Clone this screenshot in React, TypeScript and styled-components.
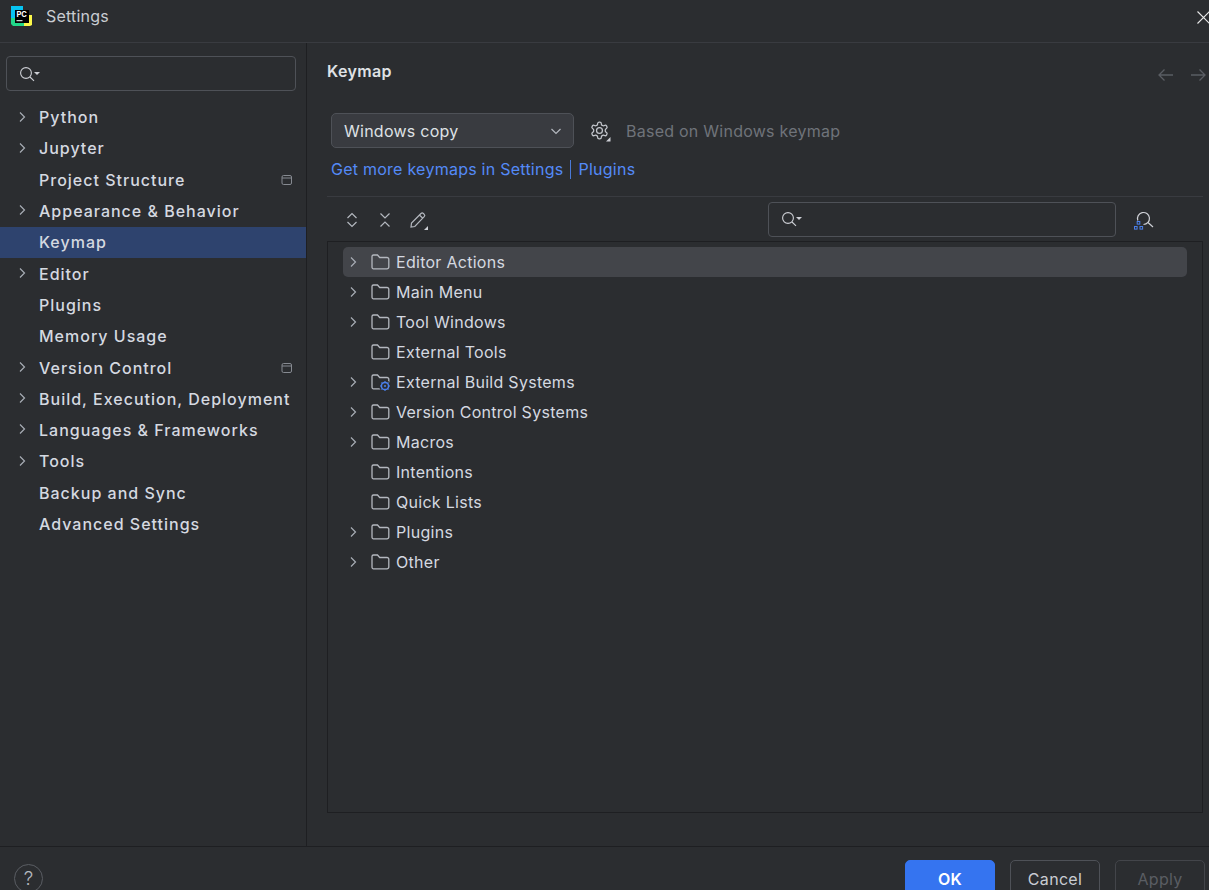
import React from 'react';
import styled, { createGlobalStyle } from 'styled-components';

const GlobalStyle = createGlobalStyle`
	html, body {
		margin: 0;
		padding: 0;
		height: 890px;
		overflow: hidden;
		background: #2b2d30;
	}
	* {
		box-sizing: border-box;
	}
`;

const Window = styled.div`
	width: 1209px;
	height: 890px;
	overflow: hidden;
	display: flex;
	flex-direction: column;
	background: #2b2d30;
	color: #dfe1e5;
	font-family: Inter, 'Noto Sans', sans-serif;
	font-size: 16px;
`;

const TitleBar = styled.div`
	height: 43px;
	flex: none;
	display: flex;
	align-items: flex-start;
	padding: 6px 0 0 11px;
	border-bottom: 1px solid #393b40;
`;

const Logo = styled.svg`
	width: 21px;
	height: 21px;
	flex: none;
`;

const TitleText = styled.span`
	margin-left: 14px;
	font-size: 16px;
	letter-spacing: 0.2px;
	color: #c9ccd2;
`;

const CloseButton = styled.svg`
	margin-left: auto;
	margin-top: 5px;
	width: 13px;
	height: 13px;
	flex: none;
	position: relative;
	left: 1px;
`;

const Body = styled.div`
	height: 803px;
	flex: none;
	display: flex;
`;

const Sidebar = styled.div`
	width: 307px;
	flex: none;
	border-right: 1px solid #1e1f22;
	padding-top: 13px;
`;

const SearchBox = styled.div<{ $width: number; $height: number }>`
	width: ${p => p.$width}px;
	height: ${p => p.$height}px;
	flex: none;
	display: flex;
	align-items: center;
	padding-left: 12px;
	border: 1px solid #4e5157;
	border-radius: 4px;
`;

const SidebarSearch = styled(SearchBox)`
	margin: 0 0 10.5px 6px;
`;

const NavRow = styled.div<{ $selected?: boolean }>`
	height: 31.3px;
	display: flex;
	align-items: center;
	position: relative;
	padding-left: 39px;
	letter-spacing: 1px;
	font-weight: 500;
	color: #d5d9e0;
	background: ${p => (p.$selected ? '#2e436e' : 'transparent')};
`;

const NavChevron = styled.svg`
	position: absolute;
	left: 16px;
	top: 9px;
	width: 12px;
	height: 12px;
`;

const ProjectBadge = styled.svg`
	position: absolute;
	right: 13px;
	top: 10px;
	width: 12px;
	height: 12px;
`;

const Main = styled.div`
	flex: 1;
	min-width: 0;
	padding: 0 6px 0 20px;
	display: flex;
	flex-direction: column;
`;

const HeadingRow = styled.div`
	height: 70px;
	flex: none;
	display: flex;
	align-items: flex-start;
	justify-content: space-between;
`;

const Heading = styled.h1`
	margin: 19px 0 0 0;
	font-size: 16px;
	line-height: 19px;
	font-weight: 600;
	letter-spacing: 0.35px;
	color: #dfe1e5;
`;

const NavArrows = styled.div`
	display: flex;
	gap: 16px;
	margin: 25px -10px 0 0;
	width: 56px;
`;

const ArrowIcon = styled.svg`
	width: 17px;
	height: 14px;
	flex: none;
`;

const KeymapRow = styled.div`
	display: flex;
	align-items: center;
	height: 35px;
	padding-left: 4px;
`;

const KeymapSelect = styled.div`
	width: 243px;
	height: 35px;
	display: flex;
	align-items: center;
	justify-content: space-between;
	padding: 0 11px 0 12px;
	background: #393b40;
	border: 1px solid #4e5157;
	border-radius: 5px;
	letter-spacing: 0.25px;
	color: #dfe1e5;
`;

const GearIcon = styled.svg`
	width: 22px;
	height: 22px;
	margin-left: 15px;
	flex: none;
`;

const BasedOn = styled.span`
	margin-left: 15px;
	color: #6f737a;
	letter-spacing: 0.25px;
`;

const LinksRow = styled.div`
	height: 49px;
	flex: none;
	display: flex;
	align-items: center;
	padding: 0 0 6px 4px;
	border-bottom: 1px solid #393b40;
	color: #548af7;
	letter-spacing: 0.25px;
`;

const LinkSeparator = styled.span`
	width: 1px;
	height: 19px;
	margin: 0 7px;
	background: #4a7ad8;
`;

const Toolbar = styled.div`
	height: 44px;
	flex: none;
	display: flex;
	align-items: center;
	padding-left: 15px;
`;

const ToolIcon = styled.svg`
	width: 20px;
	height: 20px;
	flex: none;
	margin: 1px 13px 0 0;
`;

const ToolbarSearch = styled(SearchBox)`
	margin-left: 327px;
	margin-right: 18px;
`;

const FindShortcutIcon = styled.svg`
	width: 22px;
	height: 22px;
	flex: none;
	margin-top: 1px;
`;

const TreePanel = styled.div`
	height: 572px;
	flex: none;
	padding: 5px 15px 0 15px;
	border: 1px solid #1e1f22;
`;

const TreeRow = styled.div<{ $selected?: boolean }>`
	height: 30px;
	display: flex;
	align-items: center;
	padding-left: 4px;
	border-radius: 5px;
	letter-spacing: 0.28px;
	color: #d5d9e0;
	background: ${p => (p.$selected ? '#43454a' : 'transparent')};
`;

const TreeChevronSlot = styled.div`
	width: 24px;
	height: 14px;
	flex: none;
	display: flex;
	align-items: center;
`;

const TreeChevron = styled.svg`
	width: 12px;
	height: 12px;
`;

const FolderIcon = styled.svg`
	width: 20px;
	height: 18px;
	margin-right: 5px;
	flex: none;
`;

const Footer = styled.div`
	flex: 1;
	display: flex;
	align-items: flex-start;
	padding: 13px 4px 0 14px;
	border-top: 1px solid #1e1f22;
`;

const HelpButton = styled.div`
	width: 29px;
	height: 29px;
	margin-top: 4px;
	display: flex;
	align-items: center;
	justify-content: center;
	border: 1px solid #5a5d63;
	border-radius: 50%;
	color: #b4b8bf;
	font-size: 19px;
	font-weight: 300;
`;

const FooterActions = styled.div`
	margin-left: auto;
	display: flex;
	gap: 15px;
`;

const DialogButton = styled.div<{ $kind: 'primary' | 'normal' | 'disabled' }>`
	width: 90px;
	height: 38px;
	display: flex;
	align-items: center;
	justify-content: center;
	border-radius: 5px;
	letter-spacing: 0.3px;
	font-weight: ${p => (p.$kind === 'primary' ? 600 : 400)};
	background: ${p => (p.$kind === 'primary' ? '#3574f0' : 'transparent')};
	color: ${p => (p.$kind === 'primary' ? '#ffffff' : p.$kind === 'normal' ? '#c9ccd2' : '#5a5d63')};
	border: 1px solid ${p => (p.$kind === 'primary' ? '#3574f0' : p.$kind === 'normal' ? '#4e5157' : '#43454a')};
`;

const SearchIcon = () => (
	<svg width="22" height="16" viewBox="0 0 22 16" fill="none">
		<circle cx="7" cy="7" r="5.4" stroke="#ced0d6" strokeWidth="1.1" />
		<path d="M11 11l4 3.8" stroke="#ced0d6" strokeWidth="1.1" />
		<path d="M15 6h6l-3 3z" fill="#ced0d6" />
	</svg>
);

const Chevron = () => <path d="M4 1.5L8.5 6 4 10.5" fill="none" stroke="#a8adb5" strokeWidth="1.2" />;

const Folder = ({ badge }: { badge?: boolean }) => (
	<FolderIcon viewBox="0 0 20 18" fill="none">
		<path
			d="M1 3.5A1.5 1.5 0 0 1 2.5 2h4l2.2 2.5H16a1.8 1.8 0 0 1 1.8 1.8V14a1.8 1.8 0 0 1-1.8 1.8H2.5A1.5 1.5 0 0 1 1 14.3z"
			stroke="#b4b8bf"
			strokeWidth="1.3"
		/>
		{badge && (
			<>
				<circle cx="14" cy="13" r="6" fill="#2b2d30" />
				<circle cx="14" cy="13" r="3.6" stroke="#4b80ec" strokeWidth="1.5" />
				<circle cx="14" cy="13" r="1" fill="#4b80ec" />
				<path
					d="M14 8v1.6M14 16.4V18M9 13h1.6M17.4 13H19M10.5 9.5l1 1M16.5 15.5l1 1M17.5 9.5l-1 1M11.5 15.5l-1 1"
					stroke="#4b80ec"
					strokeWidth="1.1"
				/>
			</>
		)}
	</FolderIcon>
);

const navItems = [
	{ label: 'Python', arrow: true },
	{ label: 'Jupyter', arrow: true },
	{ label: 'Project Structure', badge: true },
	{ label: 'Appearance & Behavior', arrow: true },
	{ label: 'Keymap', selected: true },
	{ label: 'Editor', arrow: true },
	{ label: 'Plugins' },
	{ label: 'Memory Usage' },
	{ label: 'Version Control', arrow: true, badge: true },
	{ label: 'Build, Execution, Deployment', arrow: true },
	{ label: 'Languages & Frameworks', arrow: true },
	{ label: 'Tools', arrow: true },
	{ label: 'Backup and Sync' },
	{ label: 'Advanced Settings' }
];

const treeItems = [
	{ label: 'Editor Actions', arrow: true, selected: true },
	{ label: 'Main Menu', arrow: true },
	{ label: 'Tool Windows', arrow: true },
	{ label: 'External Tools' },
	{ label: 'External Build Systems', arrow: true, gear: true },
	{ label: 'Version Control Systems', arrow: true },
	{ label: 'Macros', arrow: true },
	{ label: 'Intentions' },
	{ label: 'Quick Lists' },
	{ label: 'Plugins', arrow: true },
	{ label: 'Other', arrow: true }
];

export default function App() {
	return (
		<Window>
			<GlobalStyle />
			<TitleBar>
				<Logo viewBox="0 0 21 21">
					<path d="M0 0h12v8H4v6H0z" fill="#07c3f2" />
					<path d="M0 12h5v5h8v3H2l-2-2z" fill="#21d789" />
					<path d="M13 16h5V9h3v10l-2 1h-6z" fill="#fcf84a" />
					<rect x="4" y="4" width="14" height="13" fill="#000" />
					<text x="5.5" y="10.5" fontSize="7.5" fontWeight="700" fontFamily="Inter" fill="#fff">
						PC
					</text>
					<rect x="5.5" y="14.2" width="6" height="1" fill="#fff" />
				</Logo>
				<TitleText>Settings</TitleText>
				<CloseButton viewBox="0 0 13 13">
					<path d="M.5.5l12 12M12.5.5l-12 12" stroke="#e8e8e8" strokeWidth="1.1" />
				</CloseButton>
			</TitleBar>
			<Body>
				<Sidebar>
					<SidebarSearch $width={290} $height={35}>
						<SearchIcon />
					</SidebarSearch>
					{navItems.map(item => (
						<NavRow key={item.label} $selected={item.selected}>
							{item.arrow && (
								<NavChevron viewBox="0 0 12 12">
									<Chevron />
								</NavChevron>
							)}
							{item.label}
							{item.badge && (
								<ProjectBadge viewBox="0 0 12 12" fill="none">
									<rect x="1" y="1.5" width="9.5" height="9" rx="1.5" stroke="#868a91" />
									<path d="M1 4h9.5" stroke="#868a91" />
								</ProjectBadge>
							)}
						</NavRow>
					))}
				</Sidebar>
				<Main>
					<HeadingRow>
						<Heading>Keymap</Heading>
						<NavArrows>
							<ArrowIcon viewBox="0 0 17 14" fill="none">
								<path d="M16 7H2M7.5 1.5L2 7l5.5 5.5" stroke="#5a5d63" strokeWidth="1.3" />
							</ArrowIcon>
							<ArrowIcon viewBox="0 0 17 14" fill="none">
								<path d="M1 7h14M9.5 1.5L15 7l-5.5 5.5" stroke="#5a5d63" strokeWidth="1.3" />
							</ArrowIcon>
						</NavArrows>
					</HeadingRow>
					<KeymapRow>
						<KeymapSelect>
							Windows copy
							<svg width="12" height="12" viewBox="0 0 12 12" fill="none">
								<path d="M1.5 4L6 8.5 10.5 4" stroke="#b4b8bf" strokeWidth="1.2" />
							</svg>
						</KeymapSelect>
						<GearIcon viewBox="0 0 22 22" fill="none">
							<g transform="translate(0.4 0.4) scale(0.84)" stroke="#c4c7cd" strokeWidth="1.5">
								<path d="M12.22 2h-.44a2 2 0 0 0-2 2v.18a2 2 0 0 1-1 1.73l-.43.25a2 2 0 0 1-2 0l-.15-.08a2 2 0 0 0-2.73.73l-.22.38a2 2 0 0 0 .73 2.73l.15.1a2 2 0 0 1 1 1.72v.51a2 2 0 0 1-1 1.74l-.15.09a2 2 0 0 0-.73 2.73l.22.38a2 2 0 0 0 2.73.73l.15-.08a2 2 0 0 1 2 0l.43.25a2 2 0 0 1 1 1.73V20a2 2 0 0 0 2 2h.44a2 2 0 0 0 2-2v-.18a2 2 0 0 1 1-1.73l.43-.25a2 2 0 0 1 2 0l.15.08a2 2 0 0 0 2.73-.73l.22-.39a2 2 0 0 0-.73-2.73l-.15-.08a2 2 0 0 1-1-1.74v-.5a2 2 0 0 1 1-1.74l.15-.09a2 2 0 0 0 .73-2.73l-.22-.38a2 2 0 0 0-2.73-.73l-.15.08a2 2 0 0 1-2 0l-.43-.25a2 2 0 0 1-1-1.73V4a2 2 0 0 0-2-2z" />
								<circle cx="12" cy="12" r="3.5" />
							</g>
							<path d="M21.5 17v4.5H17z" fill="#ced0d6" />
						</GearIcon>
						<BasedOn>Based on Windows keymap</BasedOn>
					</KeymapRow>
					<LinksRow>
						Get more keymaps in Settings
						<LinkSeparator />
						Plugins
					</LinksRow>
					<Toolbar>
						<ToolIcon viewBox="0 0 20 20" fill="none">
							<path d="M5.5 8L10 3.5 14.5 8M5.5 12l4.5 4.5 4.5-4.5" stroke="#b4b8bf" strokeWidth="1.2" />
						</ToolIcon>
						<ToolIcon viewBox="0 0 20 20" fill="none">
							<path d="M5.5 3.5L10 8l4.5-4.5M5.5 16.5L10 12l4.5 4.5" stroke="#b4b8bf" strokeWidth="1.2" />
						</ToolIcon>
						<ToolIcon viewBox="0 0 20 20" fill="none">
							<path
								d="M3 17l.5-4L13 3.5a1.7 1.7 0 0 1 2.4 0l.8.8a1.7 1.7 0 0 1 0 2.4L6.8 16.5zM11.5 5L15 8.5"
								stroke="#b4b8bf"
								strokeWidth="1.2"
							/>
							<path d="M20 16v4h-4z" fill="#ced0d6" />
						</ToolIcon>
						<ToolbarSearch $width={348} $height={35}>
							<SearchIcon />
						</ToolbarSearch>
						<FindShortcutIcon viewBox="0 0 22 22" fill="none">
							<path d="M3.8 11.5A6 6 0 1 1 9.5 15.5" stroke="#ced0d6" strokeWidth="1.2" />
							<path d="M14 13.5l5 4.5" stroke="#ced0d6" strokeWidth="1.2" />
							<rect x="3.2" y="12.5" width="2.6" height="2.6" stroke="#4b80ec" />
							<rect x=".5" y="17.5" width="2.6" height="2.6" stroke="#4b80ec" />
							<rect x="6" y="17.5" width="2.6" height="2.6" stroke="#4b80ec" />
						</FindShortcutIcon>
					</Toolbar>
					<TreePanel>
						{treeItems.map(item => (
							<TreeRow key={item.label} $selected={item.selected}>
								<TreeChevronSlot>
									{item.arrow && (
										<TreeChevron viewBox="0 0 12 12">
											<Chevron />
										</TreeChevron>
									)}
								</TreeChevronSlot>
								<Folder badge={item.gear} />
								{item.label}
							</TreeRow>
						))}
					</TreePanel>
				</Main>
			</Body>
			<Footer>
				<HelpButton>?</HelpButton>
				<FooterActions>
					<DialogButton $kind="primary">OK</DialogButton>
					<DialogButton $kind="normal">Cancel</DialogButton>
					<DialogButton $kind="disabled">Apply</DialogButton>
				</FooterActions>
			</Footer>
		</Window>
	);
}
